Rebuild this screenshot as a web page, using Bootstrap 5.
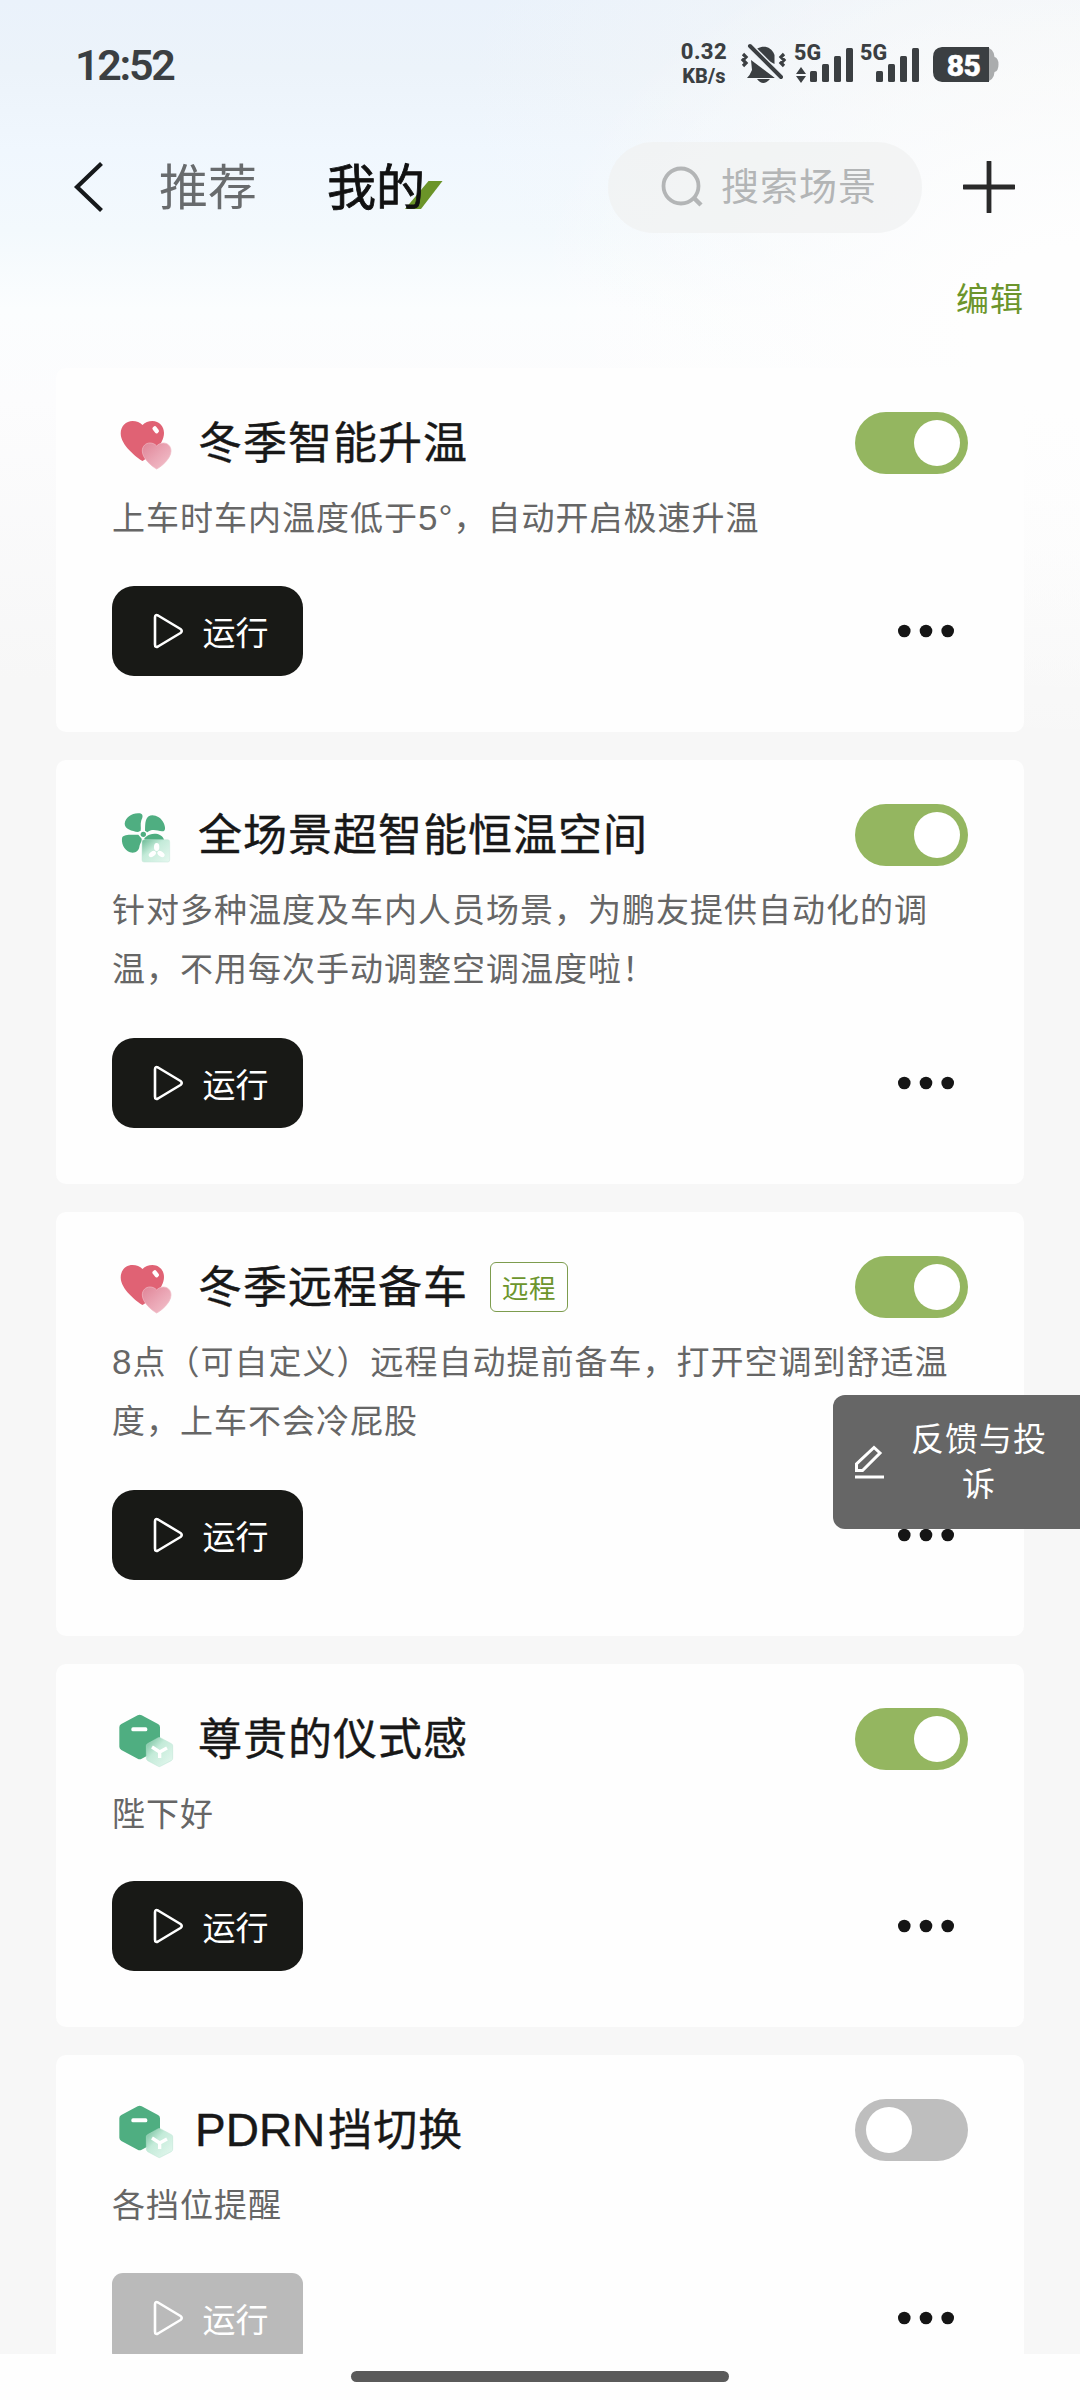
<!DOCTYPE html>
<html lang="zh-CN">
<head>
<meta charset="utf-8">
<meta name="viewport" content="width=device-width, initial-scale=1">
<title>我的场景</title>
<link href="https://cdn.jsdelivr.net/npm/bootstrap@5.3.0/dist/css/bootstrap.min.css" rel="stylesheet">
<style>
  body { font-family: "Noto Sans CJK SC", sans-serif; background: #f7f7f7; letter-spacing: 1px; }
  .screen {
    width: 1080px; height: 2400px;
    background:
      radial-gradient(ellipse 560px 420px at 100% 330px, #fefefe 20%, rgba(254,254,254,0) 100%),
      radial-gradient(ellipse 620px 330px at 100% 90px, rgba(246,247,247,.95) 0%, rgba(246,247,247,0) 100%),
      linear-gradient(180deg, #eaf2fb 0, #ecf3fa 70px, #f0f7fe 150px, #f3f9fd 230px, #fbfdfe 310px, #fcfcfd 400px, #f7f7f7 680px);
  }
  .statusbar { height: 128px; padding: 0 70px 0 75px; color: #3b3f42; font-family: Roboto, "Noto Sans CJK SC", sans-serif; }
  .clock { font-size: 43px; font-weight: 600; letter-spacing: -2.3px; padding-top: 3px; }
  .rate { font-weight: 800; font-size: 22px; line-height: 24px; letter-spacing: .4px; margin-right: 11px; }
  .rate small { font-size: 20px; letter-spacing: 0; }
  .topnav { height: 118px; padding-left: 73px; padding-right: 65px; }
  .tab-item { font-size: 49px; height: 60px; line-height: 54px; letter-spacing: 0; color: #686b6d; margin-left: 55px; }
  .tab-item.active { color: #111; -webkit-text-stroke: .8px #111; margin-left: 70px; }
  .slash { right: -19px; top: 24px; z-index: 0; }
  .search { width: 314px; height: 91px; background: rgba(240,241,241,.75); color: #b3b5b6; font-size: 38px; padding-left: 53px; margin-right: 41px; }
  .search span { height: 60px; line-height: 53px; }
  .edit { height: 122px; padding: 20px 56px 0 0; font-size: 33px; line-height: 62px; color: #6c952c; }
  .list { height: 1986px; padding: 0 56px; gap: 28px; }
  .scene { border: 0; border-radius: 10px; background: #fefefe; padding: 44px 56px 56px; flex: none; }
  .scene-head { height: 62px; }
  .scene-title { font-size: 44px; letter-spacing: 1px; height: 62px; line-height: 57px; color: #181818; margin-left: 22px; -webkit-text-stroke: .4px #181818; }
  .scene-title .latin { font-family: "Liberation Sans", sans-serif; font-size: 46px; letter-spacing: 0; margin: 0 3px 0 -3px; }
  .desc { font-size: 33px; line-height: 59.5px; color: #666; margin: 13px -30px 39px 0; }
  .desc.two-line { margin-bottom: 40px; }
  .desc .num { font-family: "Liberation Sans", sans-serif; font-size: 35px; letter-spacing: 1px; line-height: 1; }
  .remote { font-size: 26.5px; line-height: 48px; letter-spacing: .6px; color: #6c952c; border: 1.5px solid #7d9c4e; border-radius: 6px; padding: 0 11px; margin-left: 22px; }
  .toggle.form-check-input { width: 113px; height: 62px; border: 0; margin: 0; padding: 0; background-color: #bebebe; background-image: none; border-radius: 31px; opacity: 1; }
  .toggle.form-check-input:checked { background-color: #94b660; background-image: none; }
  .toggle::after { content: ""; display: block; width: 46px; height: 46px; border-radius: 50%; background: #fff; margin: 8px 0 0 11px; }
  .toggle:checked::after { margin-left: 59px; }
  .run { width: 191px; height: 90px; border: 0; border-radius: 22px; background: #181916; color: #fff; font-size: 33px; line-height: 48px; padding: 0 0 0 5px; gap: 19px; }
  .run:disabled { background: #bababa; color: #fff; opacity: 1; border-radius: 11px; }
  .more { margin-right: 13px; }
  .feedback { left: 833px; top: 1395px; width: 247px; height: 134px; background: #666; color: #fff; border-radius: 12px 0 0 12px; padding-left: 21px; font-size: 33px; line-height: 45px; }
  .feedback span { width: 138px; margin: -5px 0 0 24px; }
  .homebar { height: 46px; background: #fefefe; padding-top: 17px; }
  .homebar div { width: 378px; height: 11px; background: #5a5a5a; }
</style>
<script src="https://cdn.jsdelivr.net/npm/bootstrap@5.3.0/dist/js/bootstrap.bundle.min.js"></script>
</head>
<body>
<svg width="0" height="0" class="position-absolute">
  <defs>
    <linearGradient id="pink" x1="0" y1="0" x2="1" y2="1"><stop offset="0" stop-color="#df8496"/><stop offset=".5" stop-color="#eaa5b4"/><stop offset="1" stop-color="#f3c3cd"/></linearGradient>
    <linearGradient id="mint" x1="0" y1="0" x2="1" y2="1"><stop offset="0" stop-color="#6cbb96"/><stop offset=".4" stop-color="#c4ebd9"/><stop offset="1" stop-color="#e6f8f0"/></linearGradient>
    <symbol id="i-heart" viewBox="0 0 64 64">
      <path d="M30.500 50C24 46 8.700 34 8.700 22.500C8.700 15 14 10 20.500 10C24.500 10 28 11.600 30.500 14C33 11.600 36.500 10 40.500 10C47 10 52 15 52 22C52 34 37 46 30.500 50Z" fill="#e06274"/>
      <rect x="40" y="16.500" width="7.500" height="4.500" rx="2" fill="#fff" transform="rotate(52 43.700 18.700)"/>
      <path d="M44.700 58C40 55.500 30.300 47.500 30.300 40C30.300 35 33.800 32 38 32C40.700 32 43.200 33.200 44.700 35C46.200 33.200 48.700 32 51.400 32C55.600 32 59 35 59 40C59 47.500 49.500 55.500 44.700 58Z" fill="url(#pink)" stroke="#efb9c4" stroke-width=".7"/>
    </symbol>
    <symbol id="i-fan" viewBox="0 -6 192 192">
      <g fill="#4fae81">
        <path d="M78 81C60 78 38 72 38 56C40 36 62 22 84 25C94 28 93 36 88 46C84 58 88 68 86 77Z"/>
        <path d="M99 77C100 60 98 44 110 34C122 26 146 34 155 54C162 70 160 80 150 79C136 76 118 70 106 82Z"/>
        <path d="M104 94C116 82 150 82 156 104L156 120L100 120L97 100Z"/>
        <path d="M79 89C62 90 40 87 31 96C26 112 36 136 54 142C70 146 80 138 82 126C84 114 90 110 89 101Z"/>
        <circle cx="94" cy="88" r="8"/>
      </g>
      <rect x="90" y="104" width="83" height="67" rx="6" fill="url(#mint)" stroke="#c6e6d8" stroke-width="1.500"/>
      <g fill="#fff"><ellipse cx="134" cy="126" rx="8" ry="12"/><ellipse cx="121" cy="147" rx="12" ry="7.500" transform="rotate(-35 121 147)"/><ellipse cx="147" cy="147" rx="12" ry="7.500" transform="rotate(35 147 147)"/></g>
    </symbol>
    <symbol id="i-hex" viewBox="0 6 192 192">
      <path d="M77 31Q83 27 89 31L138 57Q144 60 144 67V125Q144 131 138 135L89 161Q83 165 77 161L28 135Q22 131 22 125V67Q22 60 28 57Z" fill="#4fae81"/>
      <rect x="58" y="67" width="48" height="12" rx="5" fill="#fff"/>
      <path d="M139 98Q142 97 145 98L178 116Q182 118 182 122V160Q182 164 178 167L145 184Q142 186 139 184L107 167Q103 164 103 160V122Q103 118 107 116Z" fill="url(#mint)" stroke="#b9e3d1" stroke-width="1.500"/>
      <path d="M120 126L143 141L165 129M143 140V159" fill="none" stroke="#fff" stroke-width="10"/>
    </symbol>
    <symbol id="i-play" viewBox="0 0 32 36"><path d="M3 4.500Q3 1 6 2.500L28.500 16Q31 18 28.500 20L6 33.500Q3 35 3 31.500Z" fill="none" stroke="#fff" stroke-width="2.600" stroke-linejoin="round"/></symbol>
    <symbol id="i-dots" viewBox="0 0 58 14"><g fill="#151515"><circle cx="7.300" cy="7" r="6.300"/><circle cx="29" cy="7" r="6.300"/><circle cx="50.700" cy="7" r="6.300"/></g></symbol>
  </defs>
</svg>

<main class="screen position-relative overflow-hidden d-flex flex-column">
  <header class="statusbar d-flex align-items-center justify-content-between flex-shrink-0">
    <div class="clock">12:52</div>
    <div class="d-flex align-items-center">
      <div class="rate d-flex flex-column align-items-center"><span>0.32</span><small>KB/s</small></div>
      <svg width="272" height="68" viewBox="738 30 272 68" fill="#3b3f42" font-family="Roboto" font-weight="800">
        <path d="M753 53C757 46 770 43 774.500 55V64ZM751 60L775 78H747Q750 75 752 70ZM757 79H770Q763 87 757 79Z"/>
        <path d="M748 45L781 78" stroke="#eef3f7" stroke-width="8"/>
        <path d="M750 46L781 77" stroke="#3b3f42" stroke-width="4" stroke-linecap="round"/>
        <path d="M743 54l3 3-3 3 3 3-3 3M784 54l-3 3 3 3-3 3 3 3" fill="none" stroke="#3b3f42" stroke-width="3.200"/>
        <text x="794" y="60" font-size="21.500" letter-spacing="0">5G</text>
        <text x="860" y="60" font-size="21.500" letter-spacing="0">5G</text>
        <path d="M801 67L806 74H796ZM801 83L796 76H806Z"/>
        <rect x="810" y="71" width="7" height="11" rx="1.500"/><rect x="822" y="64" width="7" height="18" rx="1.500"/><rect x="834" y="56" width="7" height="26" rx="1.500"/><rect x="846" y="48" width="7" height="34" rx="1.500"/>
        <rect x="876" y="71" width="7" height="11" rx="1.500"/><rect x="888" y="64" width="7" height="18" rx="1.500"/><rect x="900" y="56" width="7" height="26" rx="1.500"/><rect x="912" y="48" width="7" height="34" rx="1.500"/>
        <path d="M980 47H985Q994 48 994.500 57Q998.500 58 998.500 64.500Q998.500 71 994.500 72Q994 81 985 82H980Z" fill="#aaacad"/>
        <path d="M942 47H989V82H942Q933 81 933 72V57Q933 48 942 47Z"/>
        <text x="963.500" y="75.500" font-size="30" fill="#fff" text-anchor="middle" letter-spacing="-.5" stroke="#fff" stroke-width=".6">85</text>
      </svg>
    </div>
  </header>

  <nav class="topnav d-flex align-items-center flex-shrink-0">
    <svg width="31" height="50" viewBox="0 0 31 50"><path d="M28.500 1.500L4 25L28.500 48.500" fill="none" stroke="#16191b" stroke-width="4.200"/></svg>
    <div class="tab-item">推荐</div>
    <div class="tab-item active position-relative">
      <svg class="slash position-absolute" width="40" height="28" viewBox="0 0 40 28"><path d="M24.500 0H38.500L17 28H1Z" fill="#6b9428"/></svg>
      <span class="position-relative">我的</span>
    </div>
    <div class="search rounded-pill d-flex align-items-center ms-auto">
      <svg width="44" height="44" viewBox="0 0 44 44" fill="none" stroke="#b3b5b6" stroke-width="3.800"><circle cx="20" cy="21" r="17.500"/><path d="M33 33L40 40" stroke-width="4.500"/></svg>
      <span class="ms-3">搜索场景</span>
    </div>
    <svg width="52" height="52" viewBox="0 0 52 52"><path d="M26 1V51M1 26H51" stroke="#2a2a2a" stroke-width="4.800" stroke-linecap="round"/></svg>
  </nav>

  <div class="edit text-end flex-shrink-0">编辑</div>

  <section class="list d-flex flex-column overflow-hidden flex-shrink-0">
    <article class="card scene">
      <div class="scene-head d-flex align-items-center">
        <svg width="64" height="64"><use href="#i-heart"/></svg><div class="scene-title">冬季智能升温</div>
        <input class="form-check-input toggle ms-auto" type="checkbox" checked>
      </div>
      <div class="desc">上车时车内温度低于<span class="num">5°</span>，自动开启极速升温</div>
      <div class="d-flex align-items-center justify-content-between">
        <button class="btn run d-flex align-items-center justify-content-center"><svg width="32" height="36"><use href="#i-play"/></svg>运行</button>
        <svg class="more" width="58" height="14"><use href="#i-dots"/></svg>
      </div>
    </article>

    <article class="card scene">
      <div class="scene-head d-flex align-items-center">
        <svg width="64" height="64"><use href="#i-fan"/></svg><div class="scene-title">全场景超智能恒温空间</div>
        <input class="form-check-input toggle ms-auto" type="checkbox" checked>
      </div>
      <div class="desc two-line">针对多种温度及车内人员场景，为鹏友提供自动化的调<br>温，不用每次手动调整空调温度啦！</div>
      <div class="d-flex align-items-center justify-content-between">
        <button class="btn run d-flex align-items-center justify-content-center"><svg width="32" height="36"><use href="#i-play"/></svg>运行</button>
        <svg class="more" width="58" height="14"><use href="#i-dots"/></svg>
      </div>
    </article>

    <article class="card scene">
      <div class="scene-head d-flex align-items-center">
        <svg width="64" height="64"><use href="#i-heart"/></svg><div class="scene-title">冬季远程备车</div>
        <span class="remote">远程</span>
        <input class="form-check-input toggle ms-auto" type="checkbox" checked>
      </div>
      <div class="desc two-line"><span class="num">8</span>点（可自定义）远程自动提前备车，打开空调到舒适温<br>度，上车不会冷屁股</div>
      <div class="d-flex align-items-center justify-content-between">
        <button class="btn run d-flex align-items-center justify-content-center"><svg width="32" height="36"><use href="#i-play"/></svg>运行</button>
        <svg class="more" width="58" height="14"><use href="#i-dots"/></svg>
      </div>
    </article>

    <article class="card scene">
      <div class="scene-head d-flex align-items-center">
        <svg width="64" height="64"><use href="#i-hex"/></svg><div class="scene-title">尊贵的仪式感</div>
        <input class="form-check-input toggle ms-auto" type="checkbox" checked>
      </div>
      <div class="desc">陛下好</div>
      <div class="d-flex align-items-center justify-content-between">
        <button class="btn run d-flex align-items-center justify-content-center"><svg width="32" height="36"><use href="#i-play"/></svg>运行</button>
        <svg class="more" width="58" height="14"><use href="#i-dots"/></svg>
      </div>
    </article>

    <article class="card scene">
      <div class="scene-head d-flex align-items-center">
        <svg width="64" height="64"><use href="#i-hex"/></svg><div class="scene-title"><span class="latin">PDRN</span>挡切换</div>
        <input class="form-check-input toggle ms-auto" type="checkbox">
      </div>
      <div class="desc">各挡位提醒</div>
      <div class="d-flex align-items-center justify-content-between">
        <button class="btn run d-flex align-items-center justify-content-center" disabled><svg width="32" height="36"><use href="#i-play"/></svg>运行</button>
        <svg class="more" width="58" height="14"><use href="#i-dots"/></svg>
      </div>
    </article>
  </section>

  <footer class="homebar d-flex justify-content-center align-items-start flex-shrink-0"><div class="rounded-pill"></div></footer>

  <aside class="feedback position-absolute d-flex align-items-center">
    <svg width="32" height="34" viewBox="0 0 32 34" fill="none" stroke="#fff" stroke-width="3"><path d="M2.500 25.500V19L20 2.500L26 8L8.500 25.500Z"/><path d="M1 32H30"/></svg>
    <span class="text-center">反馈与投诉</span>
  </aside>
</main>
</body>
</html>
